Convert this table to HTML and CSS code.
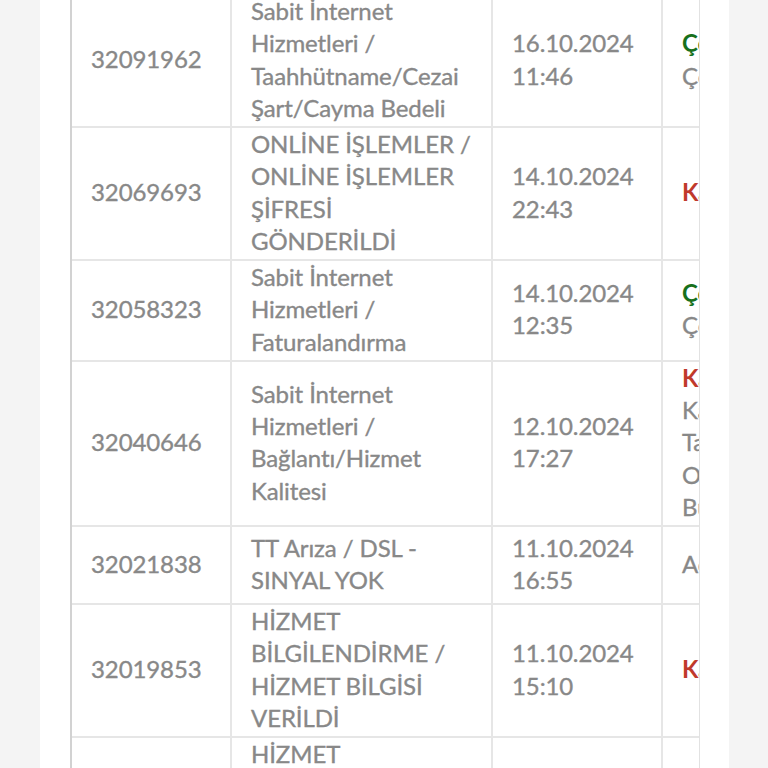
FILE: index.html
```html
<!DOCTYPE html>
<html lang="tr">
<head>
<meta charset="utf-8">
<title>Başvurular</title>
<link rel="stylesheet" href="styles.css">
</head>
<body>
<div class="page">
  <div class="table-wrap">
    <table class="records">
      <colgroup>
        <col class="c-id"><col class="c-topic"><col class="c-date"><col class="c-status">
      </colgroup>
      <tbody>
        <tr>
          <td>32091962</td>
          <td>Sabit İnternet<br>Hizmetleri /<br>Taahhütname/Cezai<br>Şart/Cayma Bedeli</td>
          <td>16.10.2024<br>11:46</td>
          <td><span class="st ok">Çözüldü</span><br>Çözüldü</td>
        </tr>
        <tr>
          <td>32069693</td>
          <td>ONLİNE İŞLEMLER /<br>ONLİNE İŞLEMLER<br>ŞİFRESİ<br>GÖNDERİLDİ</td>
          <td>14.10.2024<br>22:43</td>
          <td><span class="st closed">Kapatıldı</span></td>
        </tr>
        <tr>
          <td>32058323</td>
          <td>Sabit İnternet<br>Hizmetleri /<br>Faturalandırma</td>
          <td>14.10.2024<br>12:35</td>
          <td><span class="st ok">Çözüldü</span><br>Çözüldü</td>
        </tr>
        <tr>
          <td>32040646</td>
          <td>Sabit İnternet<br>Hizmetleri /<br>Bağlantı/Hizmet<br>Kalitesi</td>
          <td>12.10.2024<br>17:27</td>
          <td><span class="st closed">Kapatıldı</span><br>Kayıt<br>Talep<br>Olumsuz<br>Bulunmuştur</td>
        </tr>
        <tr class="tall">
          <td>32021838</td>
          <td>TT Arıza / DSL -<br>SINYAL YOK</td>
          <td>11.10.2024<br>16:55</td>
          <td>Açık</td>
        </tr>
        <tr>
          <td>32019853</td>
          <td>HİZMET<br>BİLGİLENDİRME /<br>HİZMET BİLGİSİ<br>VERİLDİ</td>
          <td>11.10.2024<br>15:10</td>
          <td><span class="st closed">Kapatıldı</span></td>
        </tr>
        <tr>
          <td></td>
          <td>HİZMET<br>BİLGİLENDİRME /<br>HİZMET BİLGİSİ<br>VERİLDİ</td>
          <td>10.10.2024<br>09:12</td>
          <td><span class="st closed">Kapatıldı</span></td>
        </tr>
      </tbody>
    </table>
  </div>
</div>
</body>
</html>
```
FILE: styles.css
```css
html, body {
  margin: 0;
  padding: 0;
  height: 100%;
  overflow: hidden;
}
body {
  background: #f4f4f4;
  font-family: Lato, "Open Sans", sans-serif;
}
.page {
  margin: 0 39px 0 40px;
  background: #ffffff;
  padding: 0 29px 0 30px;
  height: 100%;
  overflow: hidden;
}
.table-wrap {
  overflow: hidden;
  margin-top: -7px;
  border-left: 2px solid #d2d2d2;
  border-right: 1px solid #e2e2e2;
}
.records {
  border-collapse: collapse;
  table-layout: fixed;
  width: 900px;
}
.c-id { width: 159px; }
.c-topic { width: 261px; }
.c-date { width: 170px; }
.c-status { width: 310px; }
.records td {
  border-top: 2px solid #e6e6e6;
  border-bottom: 2px solid #e6e6e6;
  border-right: 2px solid #e6e6e6;
  padding: 0 20px 2px 19px;
  vertical-align: middle;
  color: #888888;
  font-size: 24px;
  line-height: 32.25px;
  letter-spacing: -0.1px;
  white-space: nowrap;
  -webkit-text-stroke: 0.35px currentColor;
}
.records tr.tall td {
  height: 74px;
}
.st {
  font-weight: 700;
  -webkit-text-stroke: 0;
}
.st.ok { color: #17701c; }
.st.closed { color: #c0392b; }
```
